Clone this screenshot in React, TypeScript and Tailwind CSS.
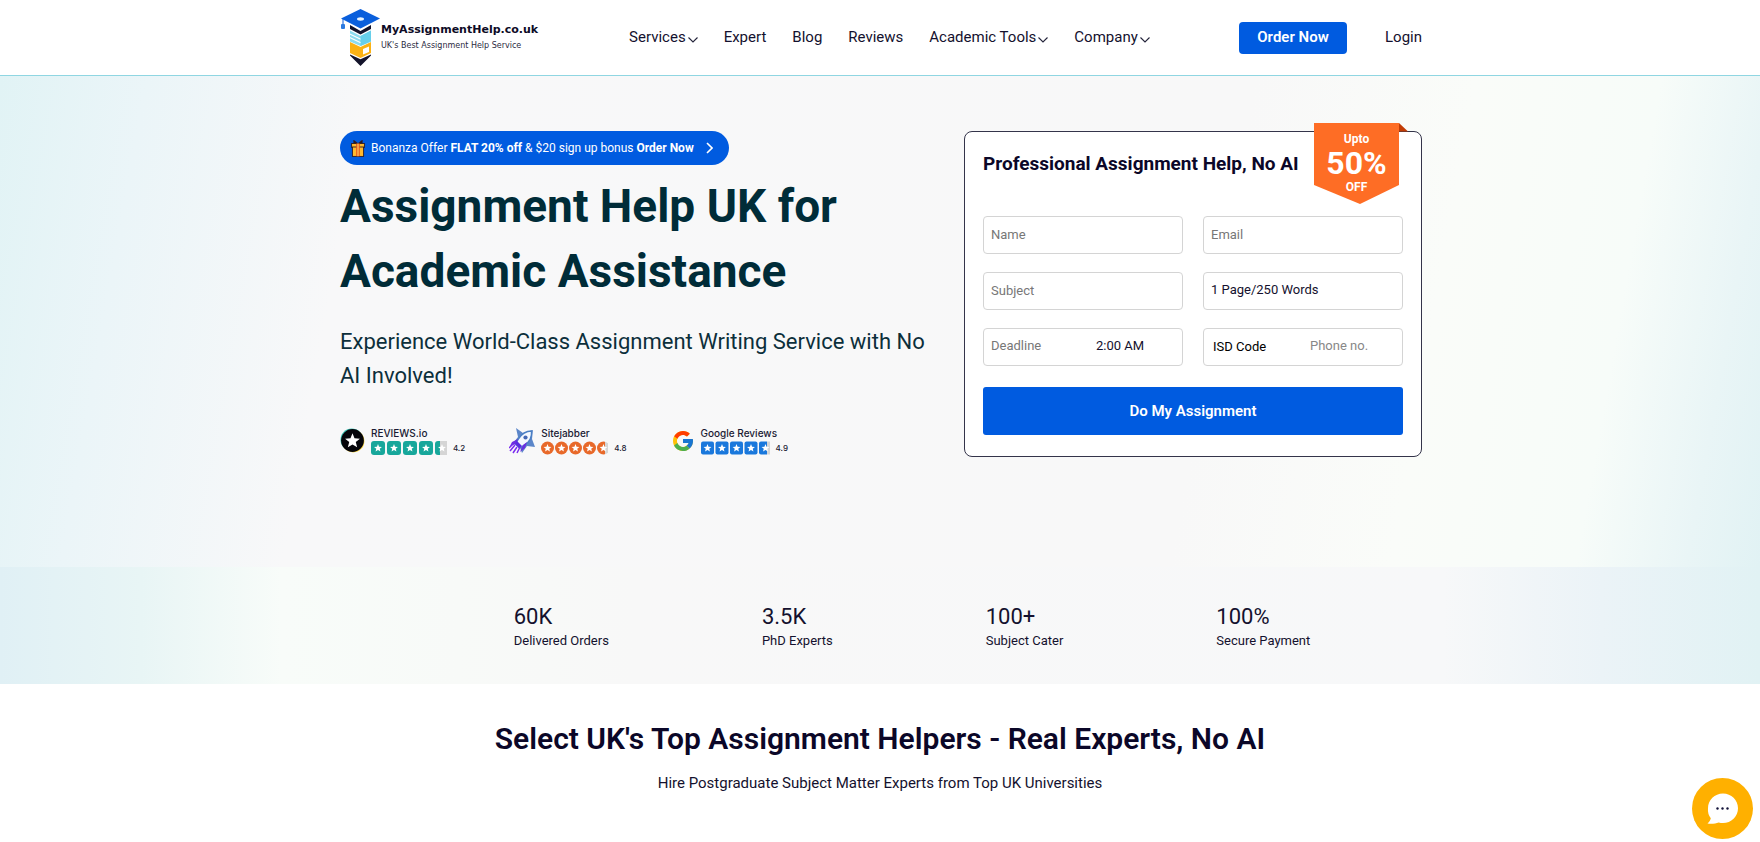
import { ReactNode } from 'react';
import { FcGoogle } from 'react-icons/fc';

const navItems = [
  { label: 'Services', menu: true },
  { label: 'Expert', menu: false },
  { label: 'Blog', menu: false },
  { label: 'Reviews', menu: false },
  { label: 'Academic Tools', menu: true },
  { label: 'Company', menu: true },
];

const stats = [
  { value: '60K', label: 'Delivered Orders' },
  { value: '3.5K', label: 'PhD Experts' },
  { value: '100+', label: 'Subject Cater' },
  { value: '100%', label: 'Secure Payment' },
];

const STAR = 'M0 -5 L1.3 -1.7 L4.8 -1.5 L2.1 0.7 L3 4.1 L0 2.2 L-3 4.1 L-2.1 0.7 L-4.8 -1.5 L-1.3 -1.7 Z';

function LogoMark() {
  return (
    <svg width="41" height="58" viewBox="0 0 41 58" aria-hidden="true">
      <path d="M10 16l10.500 6L31 16v4l-10.500 5.500L10 20z" fill="#14142b" />
      <path d="M10 21.500l10.500 5.500L31 21.500v11L20.500 37 10 32.500z" fill="#8bdcf0" />
      <path d="M20.500 27L31 21.500v11L20.500 37z" fill="#67cfea" />
      <path d="M10 24.500l10.500 5v1.200l-10.500-5zM10 28l10.500 5v1.200l-10.500-5z" fill="#fff" />
      <path d="M10 33l10.500 5L31 33v11l-10.500 5-10.500-5z" fill="#fbb214" />
      <path d="M23 40l6-2.500v5.500l-6 2.500z" fill="#fff" />
      <path d="M10 45.500l10.500 4.700L31 45.500v1L20.500 57 10 46.500z" fill="#14142b" />
      <path d="M20.500 0L40 9.500 20.500 19.500 1 9.500z" fill="#0a5fdc" />
      <ellipse cx="20.500" cy="10" rx="3.500" ry="1.700" fill="#e8f4ff" />
      <path d="M3 10v7" stroke="#0a5fdc" strokeWidth="1" />
      <rect x="1" y="15" width="4" height="5" rx="1" fill="#2c7be0" />
    </svg>
  );
}

function Caret() {
  return (
    <svg width="10" height="6" viewBox="0 0 10 6" className="mt-1 ml-0.5" fill="none" stroke="#23233a" strokeWidth="1.100" aria-hidden="true">
      <path d="M0.500 0.500L5 5L9.500 0.500" />
    </svg>
  );
}

function Gift() {
  return (
    <svg width="14" height="17" viewBox="0 0 14 17" aria-hidden="true">
      <path d="M7 4L3 0.800v3zM7 4l4-3.200v3z" fill="#e8541c" stroke="#2a1b28" strokeWidth="1.200" />
      <rect x="0.600" y="3.500" width="12.800" height="4" fill="#ffb92e" stroke="#2a1b28" strokeWidth="0.900" />
      <rect x="1.400" y="7" width="11.200" height="9.400" fill="#ffb92e" stroke="#2a1b28" strokeWidth="0.900" />
      <rect x="5.200" y="3.600" width="3.600" height="12.600" fill="#e8541c" />
      <rect x="6.400" y="3.600" width="1.200" height="12.600" fill="#ffcf5e" />
    </svg>
  );
}

function ReviewsIoIcon() {
  return (
    <svg width="25" height="25" viewBox="0 0 25 25" aria-hidden="true">
      <circle cx="11.700" cy="11.700" r="11.200" fill="#3fc7b8" />
      <circle cx="13.200" cy="13.200" r="11.200" fill="#ffd83a" />
      <circle cx="12.500" cy="12.500" r="11.400" fill="#05050a" />
      <path d={STAR} transform="translate(12.500 13) scale(1.550)" fill="#fff" />
    </svg>
  );
}

function RocketIcon() {
  return (
    <svg width="26" height="27" viewBox="0 0 26 27" aria-hidden="true">
      <path d="M7 1l7 5 10-3-1 9 3 8-8-1-5 7-3-8-5-3 4-5z" fill="#5b86c9" />
      <path d="M22.500 4c-6 0-10 3-13 8l-3 5 4 4 5-3c5-3 7.500-8 7-14z" fill="#f4f8ff" stroke="#4a7fc4" strokeWidth="1.300" />
      <circle cx="16.500" cy="10.500" r="2.100" fill="#4468b5" />
      <path d="M9 12l-6 3-2 4 6-2zM14 18l-3 7 5-4 2-6z" fill="#6a2fe0" />
      <path d="M7 16l4 4-3 6M6 18l-5 6M8 20l-4 6M4 17l-4 4" stroke="#7a2cf0" strokeWidth="1.500" fill="none" />
      <path d="M8 14l5 5-3 2-4-4z" fill="#5a2be0" />
    </svg>
  );
}

type StarsProps = { id: string; color: string; size: number; pitch: number; radius: number; last: number };

function Stars({ id, color, size, pitch, radius, last }: StarsProps) {
  const width = pitch * 4 + size * 0.85;
  const half = size / 2;
  return (
    <svg width={width} height="14" viewBox={`0 0 ${width} 14`} aria-hidden="true">
      <defs>
        <linearGradient id={id}>
          <stop offset={last} stopColor={color} />
          <stop offset={last} stopColor="#d5d5d5" />
        </linearGradient>
      </defs>
      {[0, 1, 2, 3, 4].map((i) => (
        <g key={i}>
          <rect x={i * pitch} y={7 - half} width={size} height={size} rx={radius} fill={i === 4 ? `url(#${id})` : color} />
          <path d={STAR} transform={`translate(${i * pitch + half} 7.200) scale(0.820)`} fill="#fff" />
        </g>
      ))}
    </svg>
  );
}

function Rating({ icon, name, score, children }: { icon: ReactNode; name: string; score: string; children: ReactNode }) {
  return (
    <div className="flex items-center gap-1.5 font-[Inter,sans-serif] text-[#1a1a33]">
      {icon}
      <div>
        <div className="text-[10px] leading-[15px] font-medium">{name}</div>
        <div className="flex items-center gap-1.5">
          {children}
          <span className="text-[8px] leading-[14px] font-medium">{score}</span>
        </div>
      </div>
    </div>
  );
}

function OfferBadge() {
  return (
    <div className="absolute -top-[9px] right-[13px] h-[81px] w-[94px] text-white">
      <svg width="94" height="81" viewBox="0 0 94 81" className="absolute inset-0" aria-hidden="true">
        <path d="M85 0l9 8.500h-9z" fill="#c23c05" />
        <path d="M0 0h85v62L46 81 0 62z" fill="#fe6d25" />
      </svg>
      <div className="relative flex w-[85px] flex-col items-center pt-2 font-bold">
        <span className="text-[12px] leading-4">Upto</span>
        <span className="text-[32px] leading-[32px]">50%</span>
        <span className="text-[12px] leading-4">OFF</span>
      </div>
    </div>
  );
}

const box = 'h-[38px] w-full min-w-0 rounded border border-[#d4d4d4] bg-white px-[7px]';
const bare = 'min-w-0 appearance-none bg-transparent outline-none';

function OrderForm() {
  return (
    <form className="relative w-[458px] shrink-0 rounded-lg border border-[#34344a] bg-white px-[18px] pt-[18px] pb-[21px]" onSubmit={(e) => e.preventDefault()}>
      <OfferBadge />
      <h2 className="text-[19px] leading-7 font-bold text-[#0b0728]">Professional Assignment Help, No AI</h2>
      <div className="mt-[38px] grid grid-cols-2 gap-x-5 gap-y-[18px] text-[13px] text-[#14112e]">
        <input aria-label="Name" placeholder="Name" className={`${box} pb-0.5 placeholder:text-[#777]`} />
        <input aria-label="Email" placeholder="Email" className={`${box} pb-0.5 placeholder:text-[#777]`} />
        <input aria-label="Subject" placeholder="Subject" className={`${box} pb-0.5 placeholder:text-[#777]`} />
        <select aria-label="Pages" className={`${box} appearance-none pb-0.5`}>
          <option>1 Page/250 Words</option>
        </select>
        <div className={`${box} flex`}>
          <input aria-label="Deadline" placeholder="Deadline" className={`${bare} w-[105px] pb-0.5 placeholder:text-[#777]`} />
          <select aria-label="Time" className={`${bare} flex-1 pb-0.5`}>
            <option>2:00 AM</option>
          </select>
        </div>
        <div className={`${box} flex`}>
          <select aria-label="ISD Code" className={`${bare} w-[99px] pl-0.5 text-black`}>
            <option>ISD Code</option>
          </select>
          <input aria-label="Phone no." placeholder="Phone no." type="tel" className={`${bare} flex-1 pb-0.5 placeholder:text-[#888]`} />
        </div>
      </div>
      <button type="submit" className="mt-[21px] h-12 w-full rounded-[3px] bg-[#005be0] text-[15px] font-semibold text-white">
        Do My Assignment
      </button>
    </form>
  );
}

export default function App() {
  return (
    <div className="bg-white font-[Roboto,sans-serif] text-[#14112e]">
      <header className="border-b border-[#8fd6e2] bg-white">
        <div className="mx-auto flex h-[75px] max-w-[1084px] items-center pl-0.5">
          <a href="#" className="flex items-center font-['DejaVu_Sans',sans-serif]">
            <LogoMark />
            <span className="block">
              <span className="block text-[11px] leading-4 font-bold text-[#0d0b26]">MyAssignmentHelp.co.uk</span>
              <span className="block text-[8px] leading-4 text-[#2b2b3f]">UK's Best Assignment Help Service</span>
            </span>
          </a>
          <nav className="ml-[91px] flex items-center gap-[26px] text-[15px]">
            {navItems.map((item) => (
              <a key={item.label} href="#" className="flex items-center">
                {item.label}
                {item.menu && <Caret />}
              </a>
            ))}
          </nav>
          <div className="ml-auto flex items-center gap-[38px] text-[15px]">
            <button className="h-8 w-[108px] rounded bg-[#005be0] font-semibold text-white">Order Now</button>
            <a href="#">Login</a>
          </div>
        </div>
      </header>

      <section className="bg-[linear-gradient(100deg,#e1f3f5_0%,#ebf5f8_8%,#f8f8f9_20%,#f8f8f8_68%,#fafcf9_80%,#f7fcf9_90%,#e9f5f6_96%,#e1f2f4_100%)]">
        <div className="mx-auto flex max-w-[1084px] items-start justify-between pt-[55px] pb-[110px] pl-0.5">
          <div className="w-[600px]">
            <a href="#" className="inline-flex h-[34px] items-center rounded-full bg-[#005be0] pr-4 pl-[11px] text-[12px] text-white">
              <Gift />
              <span className="ml-1.5">
                Bonanza Offer <b>FLAT 20% off</b> &amp; $20 sign up bonus <b>Order Now</b>
              </span>
              <svg width="7" height="12" viewBox="0 0 7 12" className="ml-3" fill="none" stroke="#fff" strokeWidth="1.600" aria-hidden="true">
                <path d="M1 1l5 5-5 5" />
              </svg>
            </a>
            <h1 className="mt-[9px] text-[46px] leading-[65px] font-bold text-[#002c38]">
              Assignment Help UK for
              <br />
              Academic Assistance
            </h1>
            <p className="mt-[21px] text-[22px] leading-[34px] text-[#0c2f3b]">
              Experience World-Class Assignment Writing Service with No
              <br />
              AI Involved!
            </p>
            <div className="mt-[33px] flex items-center gap-11">
              <Rating icon={<ReviewsIoIcon />} name="REVIEWS.io" score="4.2">
                <Stars id="reviews" color="#17a79b" size={14} pitch={16} radius={3} last={0.35} />
              </Rating>
              <Rating icon={<RocketIcon />} name="Sitejabber" score="4.8">
                <Stars id="sitejabber" color="#e8692a" size={13} pitch={14} radius={6.5} last={0.6} />
              </Rating>
              <Rating icon={<FcGoogle size={24} />} name="Google Reviews" score="4.9">
                <Stars id="google" color="#1a78dc" size={13} pitch={14.5} radius={2} last={0.6} />
              </Rating>
            </div>
          </div>
          <OrderForm />
        </div>
      </section>

      <section className="bg-[linear-gradient(90deg,#e0f0f5_0%,#e8f5f5_8%,#f8fcf9_16%,#f8faf8_26%,#f8f8f8_36%,#f7f8f9_82%,#ebf3f7_91%,#e1f2f4_100%)]">
        <div className="mx-auto flex max-w-[1082px] justify-center gap-[153px] pt-9 pb-[33px] pl-16">
          {stats.map((stat) => (
            <div key={stat.label}>
              <div className="text-[22px] leading-7">{stat.value}</div>
              <div className="text-[13px] leading-5">{stat.label}</div>
            </div>
          ))}
        </div>
      </section>

      <section className="pt-[35px] pb-12 text-center">
        <h2 className="text-[30px] leading-10 font-semibold text-[#0b0728]">Select UK's Top Assignment Helpers - Real Experts, No AI</h2>
        <p className="mt-3 text-[15px] leading-6">Hire Postgraduate Subject Matter Experts from Top UK Universities</p>
      </section>

      <button aria-label="Chat" className="fixed right-[7px] bottom-[3px] size-[61px] rounded-full bg-[#ffb000]">
        <svg width="61" height="61" viewBox="0 0 61 61" aria-hidden="true">
          <path d="M31 15.500c8.300 0 15 6.500 15 14.700S39.300 45 31 45c-1.500 0-3-.2-4.300-.6-3 1.300-7 1.700-11.200 1.200 1.800-1.600 3-3.500 3.300-5.300A14.500 14.500 0 0 1 16 30.200c0-8.200 6.700-14.700 15-14.700z" fill="#fff" />
          <circle cx="25.500" cy="30.500" r="1.200" fill="#14143a" />
          <circle cx="30.500" cy="30.500" r="1.200" fill="#14143a" />
          <circle cx="35.500" cy="30.500" r="1.200" fill="#14143a" />
        </svg>
      </button>
    </div>
  );
}
